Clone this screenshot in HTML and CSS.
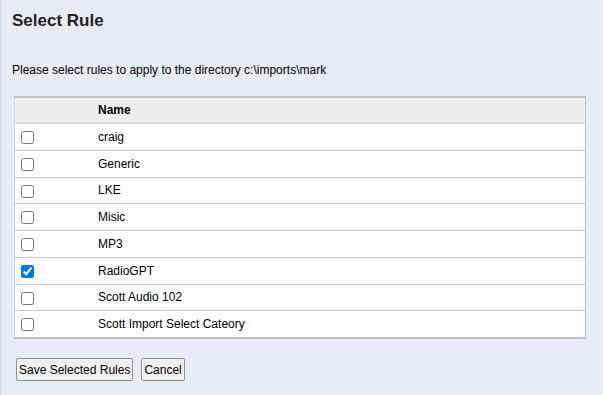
FILE: index.html
```html
<!DOCTYPE html>
<html lang="en">
<head>
    <meta charset="UTF-8">
    <title>Select Rule</title>
    <link rel="stylesheet" href="styles.css">
</head>
<body>
    <div class="page">
        <h1 class="title">Select Rule</h1>
        <p class="intro">Please select rules to apply to the directory c:\imports\mark</p>

        <table class="rules">
            <thead>
                <tr>
                    <th class="col-check"></th>
                    <th>Name</th>
                </tr>
            </thead>
            <tbody>
                <tr><td class="col-check"><input type="checkbox"></td><td>craig</td></tr>
                <tr><td class="col-check"><input type="checkbox"></td><td>Generic</td></tr>
                <tr><td class="col-check"><input type="checkbox"></td><td>LKE</td></tr>
                <tr><td class="col-check"><input type="checkbox"></td><td>Misic</td></tr>
                <tr><td class="col-check"><input type="checkbox"></td><td>MP3</td></tr>
                <tr><td class="col-check"><input type="checkbox" checked></td><td>RadioGPT</td></tr>
                <tr><td class="col-check"><input type="checkbox"></td><td>Scott Audio 102</td></tr>
                <tr><td class="col-check"><input type="checkbox"></td><td>Scott Import Select Cateory</td></tr>
            </tbody>
        </table>

        <div class="actions">
            <button>Save Selected Rules</button>
            <button>Cancel</button>
        </div>
    </div>
</body>
</html>
```

FILE: styles.css
```css
html, body {
    margin: 0;
    height: 100%;
}

body {
    font-family: "Liberation Sans", Arial, sans-serif;
    font-size: 12px;
    color: #000;
    background-color: #e7edf7;
}

.page {
    min-height: 100%;
    box-sizing: border-box;
    border-left: 2px solid #d6deec;
    padding: 11px 16px 0 10px;
}

.title {
    margin: 0;
    font-size: 17px;
    line-height: 20px;
    font-weight: bold;
    color: #222;
}

.intro {
    margin: 32px 0 0 0;
    line-height: 14px;
}

.rules {
    margin: 19px 0 0 2px;
    width: 572px;
    border-collapse: collapse;
    background-color: #ffffff;
    border-top: 2px solid #c2c2c2;
    border-right: 1px solid #c2c2c2;
    border-bottom: 2px solid #c2c2c2;
    border-left: 1px solid #d8d8d8;
}

.rules th {
    height: 24px;
    text-align: left;
    font-weight: bold;
    background-color: #eeeeee;
    border-bottom: 2px solid #dcdcdc;
    padding: 0;
}

.rules td {
    height: 25.75px;
    padding: 0;
    border-bottom: 1px solid #c8c8c8;
}

.rules .col-check {
    width: 77px;
    padding-left: 6px;
}

.rules input {
    margin: 0;
    width: 13px;
    height: 13px;
    vertical-align: middle;
}

.actions {
    margin-top: 19px;
    display: flex;
    gap: 8px;
    padding-left: 4px;
}

.actions button {
    font-family: "Liberation Sans", Arial, sans-serif;
    font-size: 12px;
    height: 23px;
    padding: 0 2px;
    background-color: #f0f0f0;
    border: 1px solid #8f8f8f;
    border-radius: 2px;
    color: #000;
}
```
